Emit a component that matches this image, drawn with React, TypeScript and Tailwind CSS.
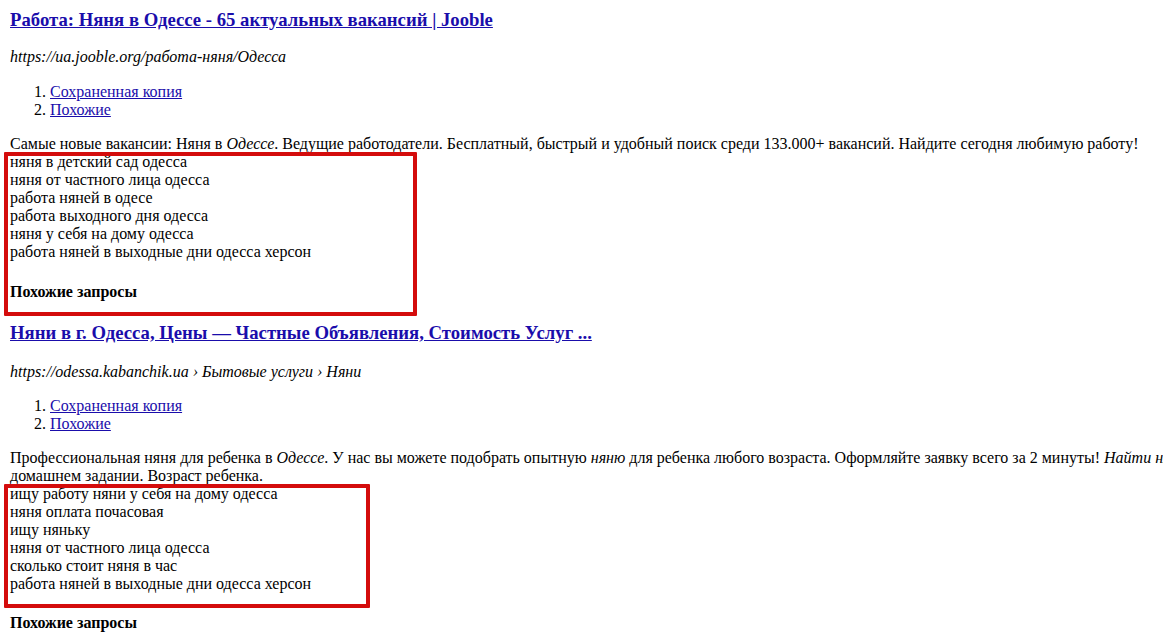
const linkCls = "text-[#1a0dab] underline";

type Result = {
  title: string;
  url: string;
  snippet: React.ReactNode;
  queries: string[];
  urlGap: string;
  listGap: string;
  hintGap: string;
  box: string;
  hintInside: boolean;
};

const RESULTS: Result[] = [
  {
    title: "Работа: Няня в Одессе - 65 актуальных вакансий | Jooble",
    url: "https://ua.jooble.org/работа-няня/Одесса",
    snippet: (
      <>
        Самые новые вакансии: Няня в <i>Одессе</i>. Ведущие работодатели. Бесплатный, быстрый и удобный поиск среди
        133.000+ вакансий. Найдите сегодня любимую работу!
      </>
    ),
    queries: [
      "няня в детский сад одесса",
      "няня от частного лица одесса",
      "работа няней в одесе",
      "работа выходного дня одесса",
      "няня у себя на дому одесса",
      "работа няней в выходные дни одесса херсон",
    ],
    urlGap: "mt-[17px]",
    listGap: "mt-[17px]",
    hintGap: "mt-[22px]",
    box: "w-[413px] h-[164px]",
    hintInside: true,
  },
  {
    title: "Няни в г. Одесса, Цены — Частные Объявления, Стоимость Услуг ...",
    url: "https://odessa.kabanchik.ua › Бытовые услуги › Няни",
    snippet: (
      <>
        Профессиональная няня для ребенка в <i>Одессе</i>. У нас вы можете подобрать опытную <i>няню</i> для ребенка
        любого возраста. Оформляйте заявку всего за 2 минуты! <i>Найти няню</i> с опытом помощи в домашнем задании.
        Возраст ребенка.
      </>
    ),
    queries: [
      "ищу работу няни у себя на дому одесса",
      "няня оплата почасовая",
      "ищу няньку",
      "няня от частного лица одесса",
      "сколько стоит няня в час",
      "работа няней в выходные дни одесса херсон",
    ],
    urlGap: "mt-[19px]",
    listGap: "mt-[16px]",
    hintGap: "mt-[21px]",
    box: "w-[366px] h-[124px]",
    hintInside: false,
  },
];

export default function App() {
  return (
    <div className="w-[1163px] h-[637px] overflow-hidden bg-white text-black font-['Liberation_Serif','Times_New_Roman',serif] text-[16px] leading-[18px]">
      <div className="w-[1340px] px-[10px] pt-[9px]">
        {RESULTS.map((r, i) => (
          <ResultBlock key={i} r={r} first={i === 0} />
        ))}
      </div>
    </div>
  );
}

function ResultBlock({ r, first }: { r: Result; first: boolean }) {
  return (
    <section className={first ? "" : "mt-[21px]"}>
      <h3 className="text-[18.72px] leading-[22px] font-bold">
        <a href="#" className={linkCls}>
          {r.title}
        </a>
      </h3>
      <div className={`${r.urlGap} italic`}>{r.url}</div>
      <ol className={`${r.listGap} pl-[40px] list-decimal`}>
        <li>
          <a href="#" className={linkCls}>
            Сохраненная копия
          </a>
        </li>
        <li>
          <a href="#" className={linkCls}>
            Похожие
          </a>
        </li>
      </ol>
      <p className="mt-[16px]">{r.snippet}</p>
      <div className="relative">
        {r.queries.map((q) => (
          <div key={q}>{q}</div>
        ))}
        {r.hintInside && <Hint gap={r.hintGap} />}
        <div className={`absolute -left-[6px] -top-[1px] ${r.box} border-4 border-[#d40c0c] rounded-[1px]`} />
      </div>
      {!r.hintInside && <Hint gap={r.hintGap} />}
    </section>
  );
}

function Hint({ gap }: { gap: string }) {
  return <h4 className={`${gap} font-bold`}>Похожие запросы</h4>;
}
